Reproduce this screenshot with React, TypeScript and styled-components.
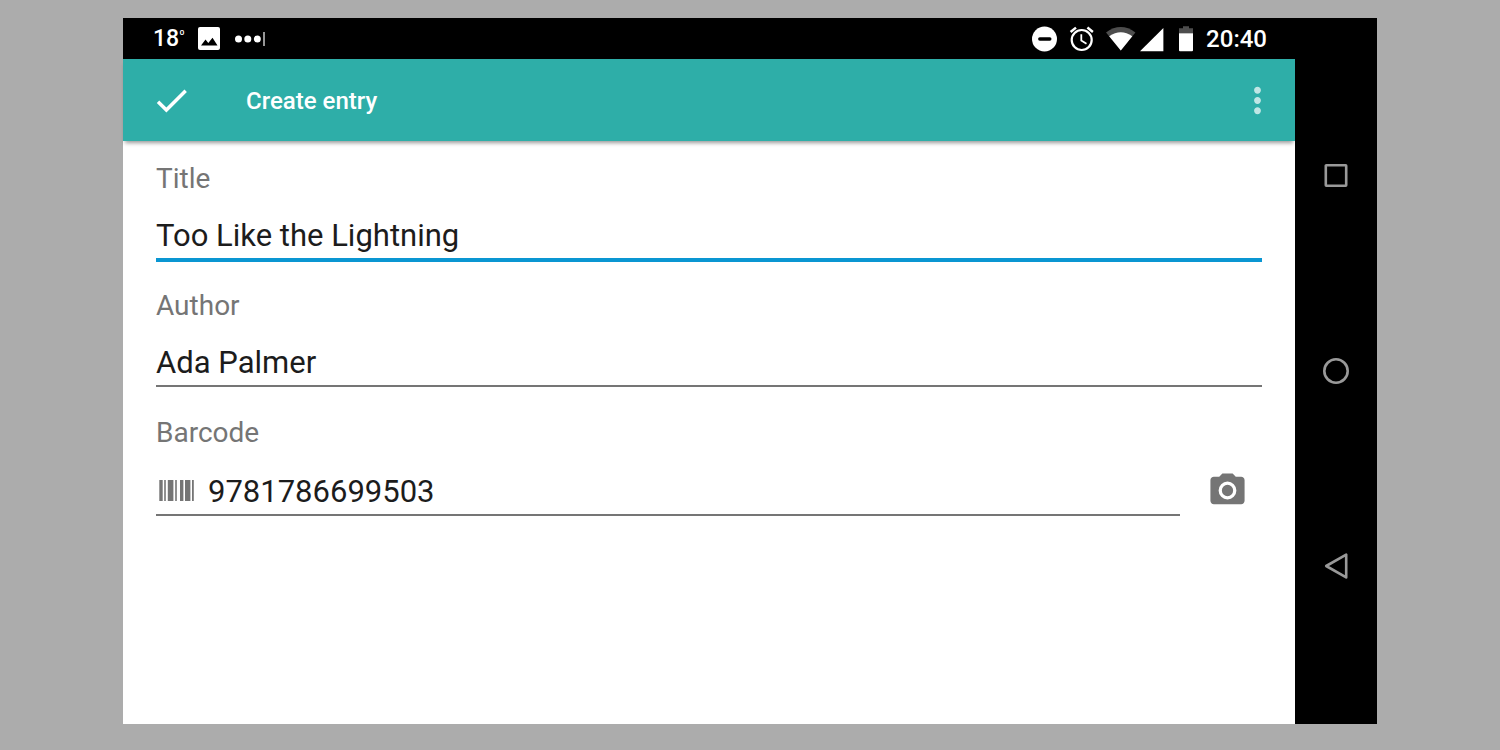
import React from "react";
import styled, { createGlobalStyle } from "styled-components";

const GlobalStyle = createGlobalStyle`
  *, *::before, *::after { box-sizing: border-box; }
  body {
    margin: 0;
    background: #acacac;
    font-family: Roboto, "Liberation Sans", sans-serif;
  }
`;

const Page = styled.div`
  min-height: 100vh;
  display: flex;
  padding: 18px 123px 26px;
`;

const Device = styled.div`
  flex: 1;
  min-width: 0;
  display: flex;
  background: #000;
`;

const Screen = styled.div`
  flex: 1;
  min-width: 0;
  display: flex;
  flex-direction: column;
`;

const StatusBar = styled.header`
  height: 41px;
  display: flex;
  align-items: center;
  justify-content: space-between;
  padding: 0 28px 0 30px;
  color: #fff;
`;

const StatusGroup = styled.div`
  display: flex;
  align-items: center;
  gap: 13px;
  svg { display: block; }
`;

const StatusText = styled.span`
  font-size: 24px;
  line-height: 28px;
  font-weight: 500;
`;

const Temperature = styled.span`
  display: flex;
  align-items: flex-start;
  font-size: 23px;
  line-height: 28px;
  font-weight: 500;
`;

const Degree = styled.span`
  font-size: 12px;
  line-height: 20px;
`;

const AppBar = styled.div`
  height: 82px;
  display: flex;
  align-items: center;
  padding: 0 17px 0 28px;
  background: #2eaea8;
  color: #fff;
  z-index: 1;
  box-shadow: 0 4px 4px -2px rgba(0, 0, 0, 0.4);
`;

const IconButton = styled.button<{ $faded?: boolean }>`
  display: flex;
  padding: 0;
  border: 0;
  background: none;
  color: inherit;
  opacity: ${(p) => (p.$faded ? 0.7 : 1)};
  cursor: pointer;
`;

const Heading = styled.h1`
  flex: 1;
  margin: 0;
  padding: 2px 0 0 54px;
  font-size: 24px;
  line-height: 32px;
  font-weight: 500;
`;

const Form = styled.form`
  flex: 1;
  display: flex;
  flex-direction: column;
  gap: 26px;
  padding: 20px 33px;
  background: #fff;
`;

const Field = styled.div`
  display: flex;
  flex-direction: column;
  gap: 15px;
`;

const Label = styled.label`
  font-size: 28px;
  line-height: 36px;
  color: #757575;
`;

const FieldRow = styled.div`
  min-height: 52px;
  display: flex;
  align-items: flex-end;
`;

const InputLine = styled.div<{ $active?: boolean }>`
  flex: 1;
  min-width: 0;
  height: 50px;
  display: flex;
  align-items: center;
  gap: 12px;
  padding-bottom: 4px;
  background: linear-gradient(
    ${(p) => (p.$active ? "#0a96d2, #0a96d2" : "#757575, #757575")}
  ) no-repeat 0 46px / 100% ${(p) => (p.$active ? 4 : 2)}px;
`;

const Input = styled.input`
  flex: 1;
  min-width: 0;
  height: 46px;
  padding: 0;
  border: 0;
  outline: 0;
  background: none;
  font-family: inherit;
  font-size: 31px;
  color: #1c1c1c;
`;

const CameraButton = styled(IconButton)`
  padding: 0 14px 7px 27px;
  color: #757575;
`;

const NavBar = styled.nav`
  width: 82px;
  display: flex;
  flex-direction: column;
  padding: 60px 0;
`;

const NavButton = styled.button`
  flex: 1;
  display: flex;
  align-items: center;
  justify-content: center;
  padding: 0;
  border: 0;
  background: none;
  color: #999;
  cursor: pointer;
`;

const Glyph = ({ d, size = 41 }: { d: string; size?: number }) => (
  <svg width={size} height={size} viewBox="0 0 24 24" fill="currentColor" aria-hidden="true">
    <path d={d} fillRule="evenodd" />
  </svg>
);

const BarcodeIcon = () => (
  <svg width="40" height="22" viewBox="0 0 40 22" fill="#757575" aria-hidden="true">
    <path d="M3.3 0h3.4v21h-3.4zM8.2 0h1.6v21h-1.6zM11.8 0h5.6v21h-5.6zM19.2 0h1.6v21h-1.6zM24 0h3.4v21h-3.4zM29 0h5.4v21h-5.4zM36 0h1.8v21h-1.8z" />
  </svg>
);

const NotificationIcons = () => (
  <>
    <svg width="22" height="23" viewBox="0 0 22 23" aria-hidden="true">
      <rect width="22" height="23" rx="2" fill="#fff" />
      <path d="M3 18.5 7.5 12.5 10.3 16 14.5 10.8 19.5 18.5z" fill="#000" />
    </svg>
    <svg width="32" height="16" viewBox="-2 0 32 16" fill="#fff" aria-hidden="true">
      <circle cx="3.5" cy="8" r="3.5" />
      <circle cx="12.8" cy="8" r="3.5" />
      <circle cx="22.3" cy="8" r="3.5" />
      <path d="M28.2 1h1.6v14h-1.6z" fill="#bbb" />
    </svg>
  </>
);

const SystemIcons = () => (
  <svg width="161" height="26" viewBox="0 0 161 26" fill="#fff" aria-hidden="true">
    <circle cx="12.5" cy="13" r="12.5" />
    <path d="M7.8 13h10" stroke="#000" strokeWidth="3.4" strokeLinecap="round" />
    <g fill="none" stroke="#fff" strokeWidth="2.2">
      <circle cx="49.7" cy="14" r="10" />
      <path d="M38.6 6 44 1.6M60.9 6 55.4 1.6" strokeWidth="2.5" />
      <path d="M49.3 8.2v6.4l5.2 3.2" strokeWidth="1.8" />
    </g>
    <path d="M74 6.4Q88.8-4.4 103.4 6.4L88.8 24.5z" fill="#4d4d4d" />
    <path d="M77.2 10.3Q88.8 2 100.3 10.3L88.8 24.5z" />
    <path d="M131.4 2v23.2h-23.4z" />
    <path d="M151 .3h6v1.9h4v5h-14v-5h4z" fill="#4d4d4d" />
    <path d="M147 7.2h14v17a1 1 0 0 1-1 1h-12a1 1 0 0 1-1-1z" />
  </svg>
);

const NavShape = ({ children }: { children: React.ReactNode }) => (
  <svg
    width="28"
    height="28"
    viewBox="0 0 28 28"
    fill="none"
    stroke="currentColor"
    strokeWidth="2.6"
    strokeLinejoin="round"
    aria-hidden="true"
  >
    {children}
  </svg>
);

export default function App() {
  return (
    <>
      <GlobalStyle />
      <Page>
        <Device>
          <Screen>
            <StatusBar>
              <StatusGroup>
                <Temperature>
                  18<Degree>º</Degree>
                </Temperature>
                <NotificationIcons />
              </StatusGroup>
              <StatusGroup>
                <SystemIcons />
                <StatusText>20:40</StatusText>
              </StatusGroup>
            </StatusBar>
            <AppBar>
              <IconButton type="button" aria-label="Save">
                <Glyph d="M9 16.17 4.83 12l-1.42 1.41L9 19 21 7l-1.41-1.41z" />
              </IconButton>
              <Heading>Create entry</Heading>
              <IconButton type="button" aria-label="More options" $faded>
                <Glyph d="M12 8c1.1 0 2-.9 2-2s-.9-2-2-2-2 .9-2 2 .9 2 2 2zm0 2c-1.1 0-2 .9-2 2s.9 2 2 2 2-.9 2-2-.9-2-2-2zm0 6c-1.1 0-2 .9-2 2s.9 2 2 2 2-.9 2-2-.9-2-2-2z" />
              </IconButton>
            </AppBar>
            <Form>
              <Field>
                <Label htmlFor="title">Title</Label>
                <InputLine $active>
                  <Input id="title" defaultValue="Too Like the Lightning" />
                </InputLine>
              </Field>
              <Field>
                <Label htmlFor="author">Author</Label>
                <InputLine>
                  <Input id="author" defaultValue="Ada Palmer" />
                </InputLine>
              </Field>
              <Field>
                <Label htmlFor="barcode">Barcode</Label>
                <FieldRow>
                  <InputLine>
                    <BarcodeIcon />
                    <Input id="barcode" inputMode="numeric" defaultValue="9781786699503" />
                  </InputLine>
                  <CameraButton type="button" aria-label="Scan barcode">
                    <Glyph d="M9 2 7.17 4H4c-1.1 0-2 .9-2 2v12c0 1.1.9 2 2 2h16c1.1 0 2-.9 2-2V6c0-1.1-.9-2-2-2h-3.17L15 2H9zm3 15.2a5.2 5.2 0 1 1 0-10.4 5.2 5.2 0 0 1 0 10.4zm0-1.9a3.3 3.3 0 1 0 0-6.6 3.3 3.3 0 0 0 0 6.6z" />
                  </CameraButton>
                </FieldRow>
              </Field>
            </Form>
          </Screen>
          <NavBar aria-label="System">
            <NavButton type="button" aria-label="Recent apps">
              <NavShape><rect x="3.8" y="3.3" width="20.4" height="20.4" rx="0.5" /></NavShape>
            </NavButton>
            <NavButton type="button" aria-label="Home">
              <NavShape><circle cx="14" cy="14" r="11.7" /></NavShape>
            </NavButton>
            <NavButton type="button" aria-label="Back">
              <NavShape><path d="M24.2 2.6v22.8L4.2 14z" /></NavShape>
            </NavButton>
          </NavBar>
        </Device>
      </Page>
    </>
  );
}
